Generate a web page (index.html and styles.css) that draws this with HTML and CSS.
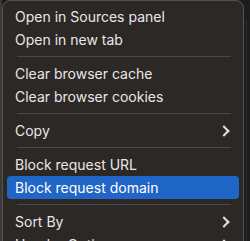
FILE: index.html
```html
<!DOCTYPE html>
<html lang="en">
<head>
<meta charset="UTF-8">
<meta name="viewport" content="width=device-width,initial-scale=1.0">
<title>Context menu</title>
<link rel="stylesheet" href="styles.css">
</head>
<body>

<div class="page">
  <div class="menu">
    <div class="item">Open in Sources panel</div>
    <div class="item">Open in new tab</div>
    <div class="sep"></div>
    <div class="item">Clear browser cache</div>
    <div class="item">Clear browser cookies</div>
    <div class="sep"></div>
    <div class="item sub">Copy <span class="chev"></span></div>
    <div class="sep"></div>
    <div class="item">Block request URL</div>
    <div class="item active">Block request domain</div>
    <div class="sep"></div>
    <div class="item sub">Sort By <span class="chev"></span></div>
    <div class="item sub">Header Options <span class="chev"></span></div>
  </div>
  <div class="side"></div>
</div>

</body>
</html>
```

FILE: styles.css
```css
html,body{
  margin:0;
  padding:0;
  background:#1c1c1c;
  font-family:"Inter","Roboto",system-ui,sans-serif;
  overflow:hidden;
}

.page{
  display:flex;
  height:241px;
  padding-left:2px;
  background:linear-gradient(to right,#3a3a3a 0,#3a3a3a 2px,transparent 2px);
}

/* ----------  MENU  ---------- */
.menu{
  width:242px;
  height:260px;
  background:#2b2826;
  border:1px solid #56524f;
  border-radius:8px;
  padding:4px 4px 0;
  box-sizing:border-box;
  flex-shrink:0;
}

.item{
  display:flex;
  align-items:center;
  justify-content:space-between;
  height:23px;
  padding:0 9px 0 8px;
  border-radius:4px;
  font-size:14px;
  color:#e9e7e6;
  white-space:nowrap;
}
.item.active{
  background:#1f66c7;
  color:#fff;
}

.chev{
  width:6px;
  height:6px;
  border-right:2px solid #e4e2e1;
  border-top:2px solid #e4e2e1;
  transform:rotate(45deg);
  margin-right:2px;
}

.sep{
  height:1px;
  margin:5px 8px 5px 10px;
  background:#4b4745;
}

.side{
  flex:1;
  margin-top:20px;
  background:linear-gradient(to right,transparent 0,transparent 2px,#2e2e2e 2px,#2e2e2e 3px,transparent 3px);
}
```
